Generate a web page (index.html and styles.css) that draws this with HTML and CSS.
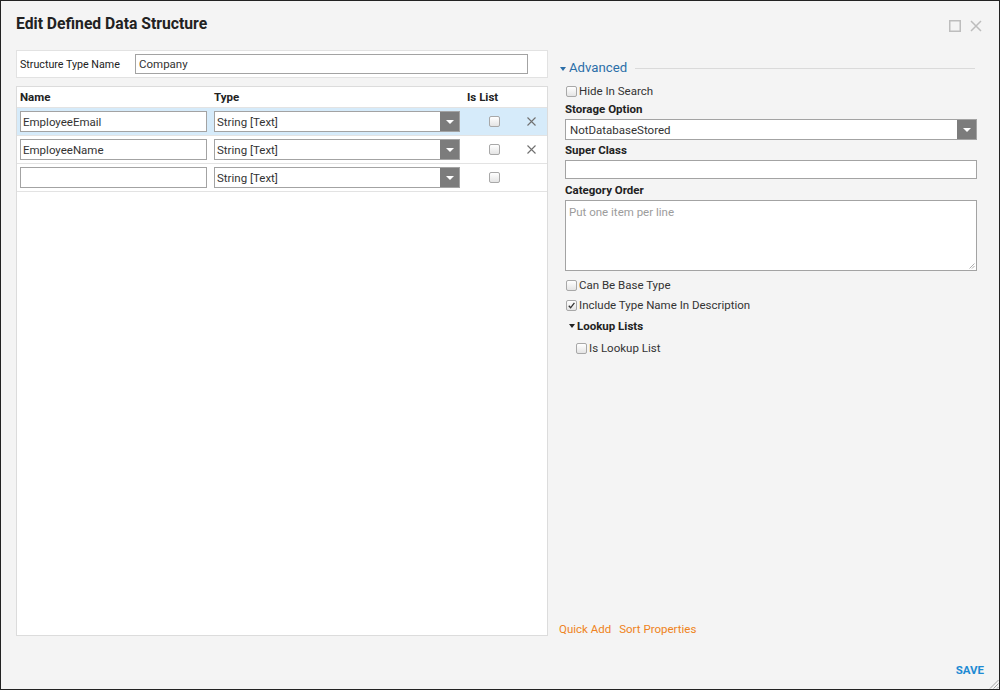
FILE: index.html
```html
<!DOCTYPE html>
<html>
<head>
<meta charset="utf-8">
<link rel="stylesheet" href="styles.css">
</head>
<body>
<div class="window">
  <div class="header">
    <div class="title">Edit Defined Data Structure</div>
    <div class="win-icons">
      <svg width="12" height="12" viewBox="0 0 12 12"><rect x="0.75" y="0.75" width="10.5" height="10.5" fill="none" stroke="#bdbdbd" stroke-width="1.5"/></svg>
      <svg width="12" height="12" viewBox="0 0 12 12"><path d="M1 1 L11 11 M11 1 L1 11" stroke="#bdbdbd" stroke-width="1.5"/></svg>
    </div>
  </div>
  <div class="main">
    <div class="left">
      <div class="stn-box">
        <span class="stn-label">Structure Type Name</span>
        <div class="input stn-input">Company</div>
      </div>
      <div class="table">
        <div class="thead">
          <div class="c-name">Name</div>
          <div class="c-type">Type</div>
          <div class="c-list">Is List</div>
        </div>
        <div class="row selected">
          <div class="input c-name-in">EmployeeEmail</div>
          <div class="select c-type-in"><span class="sel-text">String [Text]</span><span class="sel-btn"><i class="tri"></i></span></div>
          <div class="c-check"><span class="cb"></span></div>
          <div class="c-del"><svg width="9" height="9" viewBox="0 0 9 9"><path d="M0.5 0.5 L8.5 8.5 M8.5 0.5 L0.5 8.5" stroke="#707070" stroke-width="1.1"/></svg></div>
        </div>
        <div class="row">
          <div class="input c-name-in">EmployeeName</div>
          <div class="select c-type-in"><span class="sel-text">String [Text]</span><span class="sel-btn"><i class="tri"></i></span></div>
          <div class="c-check"><span class="cb"></span></div>
          <div class="c-del"><svg width="9" height="9" viewBox="0 0 9 9"><path d="M0.5 0.5 L8.5 8.5 M8.5 0.5 L0.5 8.5" stroke="#707070" stroke-width="1.1"/></svg></div>
        </div>
        <div class="row">
          <div class="input c-name-in"></div>
          <div class="select c-type-in"><span class="sel-text">String [Text]</span><span class="sel-btn"><i class="tri"></i></span></div>
          <div class="c-check"><span class="cb"></span></div>
          <div class="c-del"></div>
        </div>
      </div>
    </div>
    <div class="right">
      <div class="adv-head">
        <i class="tri-blue"></i>
        <span class="adv-text">Advanced</span>
        <span class="adv-line"></span>
      </div>
      <div class="adv-body">
        <div class="check-row first"><span class="cb"></span><span>Hide In Search</span></div>
        <div class="field-label lbl-storage">Storage Option</div>
        <div class="select wide"><span class="sel-text">NotDatabaseStored</span><span class="sel-btn"><i class="tri"></i></span></div>
        <div class="field-label lbl-super">Super Class</div>
        <div class="input wide short"></div>
        <div class="field-label lbl-cat">Category Order</div>
        <div class="textarea"><span class="placeholder">Put one item per line</span>
          <svg class="grip-small" width="6" height="6" viewBox="0 0 6 6"><path d="M5.5 0.5 L0.5 5.5 M5.5 3 L3 5.5" stroke="#999" stroke-width="0.8"/></svg>
        </div>
        <div class="check-row cbase"><span class="cb"></span><span>Can Be Base Type</span></div>
        <div class="check-row incl"><span class="cb checked"><svg width="9" height="9" viewBox="0 0 9 9"><path d="M1.8 4.8 L3.6 6.8 L7.4 1.8" fill="none" stroke="#333" stroke-width="1.3"/></svg></span><span>Include Type Name In Description</span></div>
        <div class="lookup-head"><i class="tri-dark"></i><span>Lookup Lists</span></div>
        <div class="check-row lookup"><span class="cb"></span><span>Is Lookup List</span></div>
      </div>
      <div class="links">
        <span class="link">Quick Add</span>
        <span class="link">Sort Properties</span>
      </div>
    </div>
  </div>
  <div class="footer">
    <span class="save">SAVE</span>
  </div>
  <svg class="resize" width="10" height="10" viewBox="0 0 10 10"><path d="M9.5 1 L1 9.5 M9.5 4.5 L4.5 9.5 M9.5 8 L8 9.5" stroke="#9a9a9a" stroke-width="0.9"/></svg>
</div>
</body>
</html>
```

FILE: styles.css
```css
html, body {
  margin: 0;
  padding: 0;
  background: #f4f4f4;
}
body {
  font-family: Roboto, "Liberation Sans", Arial, sans-serif;
  font-size: 11.5px;
  color: #333;
}
.window {
  position: relative;
  width: 1000px;
  height: 690px;
  box-sizing: border-box;
  border: 1px solid #222;
  background: #f4f4f4;
  display: flex;
  flex-direction: column;
}
.header {
  height: 49px;
  box-sizing: border-box;
  padding: 13px 17px 0 15px;
  display: flex;
  align-items: flex-start;
  justify-content: space-between;
}
.title {
  font-size: 15.7px;
  font-weight: 700;
  line-height: 20px;
  color: #222;
}
.win-icons {
  display: flex;
  gap: 9px;
  padding-top: 6px;
}
.main {
  height: 586px;
  display: flex;
  padding-left: 15px;
}
.left {
  width: 532px;
  display: flex;
  flex-direction: column;
}
.stn-box {
  height: 28px;
  box-sizing: border-box;
  background: #fff;
  border: 1px solid #e2e2e2;
  padding: 3px 0 0 3px;
  display: flex;
  align-items: flex-start;
}
.stn-label {
  width: 115px;
  font-size: 10.7px;
  line-height: 20px;
  padding-top: 1px;
  color: #222;
}
.input {
  box-sizing: border-box;
  background: #fff;
  border: 1px solid #a3a3a3;
  padding-left: 2px;
  line-height: 21px;
  color: #333;
  white-space: nowrap;
  overflow: hidden;
}
.stn-input {
  width: 393px;
  height: 20px;
  line-height: 19px;
  padding-left: 3px;
}
.table {
  margin-top: 8px;
  height: 550px;
  box-sizing: border-box;
  background: #fff;
  border: 1px solid #dcdcdc;
}
.thead {
  height: 21px;
  box-sizing: border-box;
  border-bottom: 1px solid #e3e3e3;
  display: flex;
  align-items: center;
  padding: 0 0 0 3px;
  font-weight: 700;
  color: #222;
}
.thead .c-name { width: 194px; }
.thead .c-type { width: 253px; }
.thead .c-list { width: 60px; }
.row {
  height: 28px;
  box-sizing: border-box;
  border-bottom: 1px solid #e3e3e3;
  display: flex;
  align-items: flex-start;
  padding: 3px 0 0 3px;
}
.row.selected {
  background: #d6ebfa;
}
.c-name-in {
  width: 187px;
  height: 21px;
  margin-right: 7px;
}
.select {
  box-sizing: border-box;
  height: 21px;
  background: #fff;
  border: 1px solid #a3a3a3;
  display: flex;
  align-items: stretch;
  overflow: hidden;
}
.sel-text {
  flex: 1;
  padding-left: 2px;
  line-height: 21px;
  height: 19px;
  color: #333;
  white-space: nowrap;
}
.sel-btn {
  width: 20px;
  background: #7c7c7c;
  display: flex;
  align-items: center;
  justify-content: center;
  margin: -1px -1px -1px 0;
}
.tri {
  width: 0;
  height: 0;
  border-left: 4px solid transparent;
  border-right: 4px solid transparent;
  border-top: 4px solid #fff;
}
.c-type-in {
  width: 246px;
}
.c-check {
  width: 68px;
  height: 21px;
  display: flex;
  align-items: center;
  justify-content: center;
}
.c-del {
  height: 21px;
  display: flex;
  align-items: center;
  margin-left: -1px;
}
.cb {
  display: inline-flex;
  align-items: center;
  justify-content: center;
  width: 11px;
  height: 11px;
  box-sizing: border-box;
  border: 1px solid #a8a8a8;
  border-radius: 2px;
  background: linear-gradient(#ffffff, #e4e4e4);
}
.right {
  width: 418px;
  margin-left: 11px;
  display: flex;
  flex-direction: column;
}
.adv-head {
  margin-top: 8px;
  height: 20px;
  display: flex;
  align-items: center;
  padding-left: 1px;
}
.tri-blue {
  width: 0;
  height: 0;
  border-left: 3.5px solid transparent;
  border-right: 3.5px solid transparent;
  border-top: 4px solid #2b6ea8;
  margin-right: 3px;
  margin-top: 1px;
}
.adv-text {
  font-size: 13.2px;
  color: #2b6ea8;
  line-height: 20px;
}
.adv-line {
  flex: 1;
  border-top: 1px solid #dadada;
  margin: 0 2px 0 8px;
}
.adv-body {
  padding-left: 6px;
  display: flex;
  flex-direction: column;
}
.check-row {
  display: flex;
  align-items: center;
  height: 16px;
  line-height: 16px;
  color: #333;
}
.check-row .cb {
  margin-left: 1px;
  margin-right: 2px;
}
.check-row.first { margin-top: 5px; }
.field-label {
  font-weight: 700;
  color: #222;
  line-height: 16px;
  margin-bottom: 2px;
}
.lbl-storage { margin-top: 2px; }
.lbl-super { margin-top: 2px; }
.lbl-cat { margin-top: 3px; }
.wide {
  width: 412px;
}
.select.wide .sel-text { padding-left: 4px; }
.input.short {
  height: 19px;
}
.textarea {
  position: relative;
  width: 412px;
  height: 71px;
  box-sizing: border-box;
  background: #fff;
  border: 1px solid #a3a3a3;
  padding: 4px 0 0 3px;
}
.placeholder {
  color: #9c9c9c;
  line-height: 14px;
}
.grip-small {
  position: absolute;
  right: 1px;
  bottom: 1px;
}
.check-row.cbase { margin-top: 6px; }
.check-row.incl { margin-top: 4px; }
.lookup-head {
  display: flex;
  align-items: center;
  height: 16px;
  margin-top: 5px;
  padding-left: 4px;
  font-weight: 700;
  color: #222;
}
.tri-dark {
  width: 0;
  height: 0;
  border-left: 3.5px solid transparent;
  border-right: 3.5px solid transparent;
  border-top: 4px solid #222;
  margin-right: 2px;
}
.check-row.lookup {
  margin-top: 6px;
  padding-left: 10px;
}
.links {
  margin-top: auto;
  line-height: 14px;
  display: flex;
  gap: 8px;
}
.link {
  color: #ef8320;
}
.footer {
  flex: 1;
  display: flex;
  justify-content: flex-end;
  padding: 26px 15px 0 0;
}
.save {
  font-weight: 700;
  color: #1d8ad3;
  line-height: 16px;
}
.resize {
  position: absolute;
  right: 0;
  bottom: 0;
}
```
